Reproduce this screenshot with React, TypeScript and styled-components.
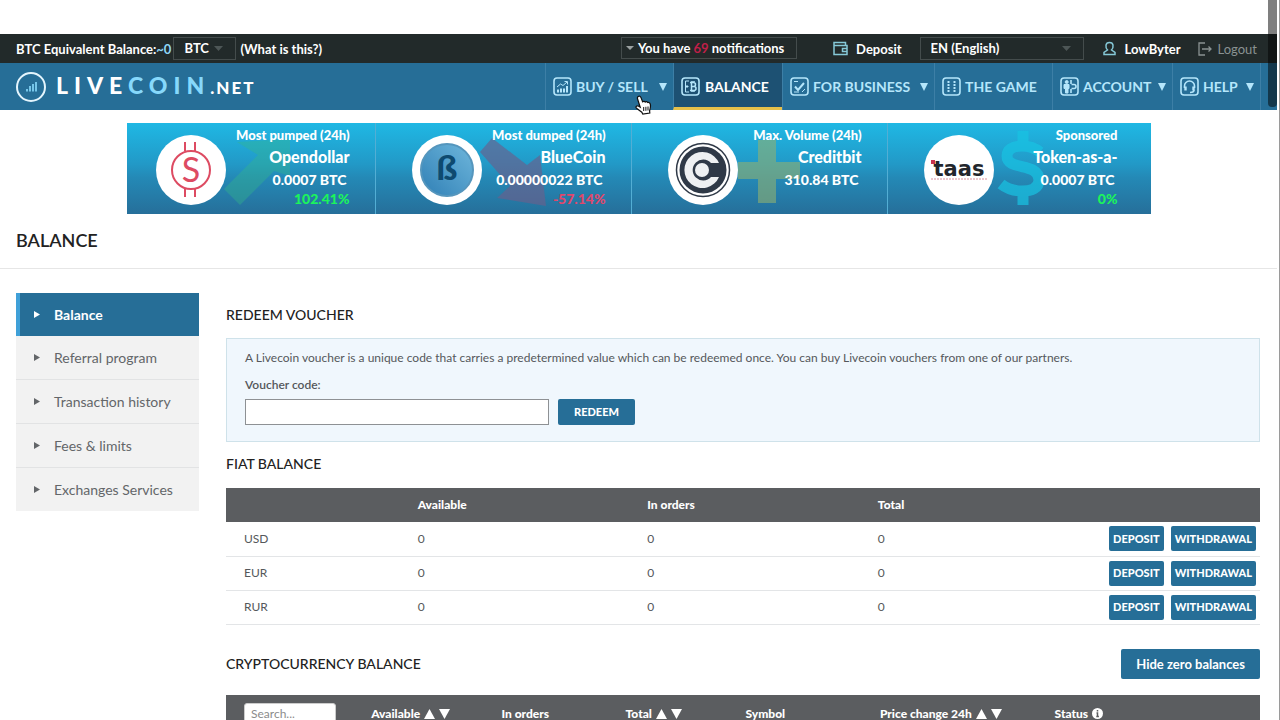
import React from "react";
import styled, { createGlobalStyle, css } from "styled-components";

const Global = createGlobalStyle`
  * { box-sizing: border-box; }
  html { scrollbar-width: none; }
  html::-webkit-scrollbar { display: none; }
  body { margin: 0; background: #fff; color: #55585b; font: 13px/18px Lato, "Liberation Sans", sans-serif; }
  button, input, select { font: inherit; }
  a { color: inherit; text-decoration: none; }
  svg { display: block; flex: none; }
`;

const Page = styled.div`
  padding-top: 34px;
  padding-right: 2px;
  min-height: 100vh;
  border-right: 1px solid #9a9a9a;
`;

/* ---------- top bar ---------- */
const TopBar = styled.div`
  display: flex;
  align-items: center;
  height: 29px;
  padding: 0 20px 0 16px;
  background: #222a2a;
  color: #fff;
  font-size: 13px;
  font-weight: 700;
`;
const Accent = styled.span`
  color: #8fd6f5;
  margin-right: 2px;
`;
const SelectWrap = styled.div<{ $w: number }>`
  display: grid;
  align-items: center;
  width: ${(p) => p.$w}px;
  height: 23px;
  border: 1px solid #444c4c;
  > * { grid-area: 1 / 1; }
  svg { justify-self: end; margin-right: 12px; pointer-events: none; }
`;
const Select = styled.select`
  appearance: none;
  width: 100%;
  height: 21px;
  padding: 0 10px;
  border: 0;
  background: transparent;
  color: #fff;
  line-height: 19px;
`;
const HintLink = styled.a`
  margin-left: 4px;
`;
const TopRight = styled.div`
  display: flex;
  align-items: center;
  margin-left: auto;
`;
const Notice = styled.button`
  display: flex;
  align-items: center;
  gap: 4px;
  width: 176px;
  height: 22px;
  margin: 0 36px 2px 0;
  padding: 0 0 0 4px;
  border: 1px solid #444c4c;
  background: transparent;
  color: #fff;
  white-space: pre;
`;
const Count = styled.span`
  color: #c01f48;
`;
const TopLink = styled.a<{ $before?: number; $after?: number; $dim?: boolean }>`
  display: flex;
  align-items: center;
  gap: 8px;
  margin-left: ${(p) => p.$before ?? 0}px;
  margin-right: ${(p) => p.$after ?? 0}px;
  ${(p) => p.$dim && css`gap: 6px; color: #8a9292; font-weight: 400;`}
`;

/* ---------- main navigation ---------- */
const NavBar = styled.header`
  display: flex;
  align-items: center;
  height: 47px;
  padding: 0 16px;
  background: #266e97;
`;
const Logo = styled.a`
  display: flex;
  align-items: center;
  gap: 10px;
  color: #fff;
  font-size: 23px;
  line-height: 28px;
  font-weight: 900;
  letter-spacing: 6px;
`;
const LogoAccent = styled.span`
  color: #86d8fb;
`;
const LogoSmall = styled.span`
  font-size: 17px;
  letter-spacing: 2px;
`;
const Menu = styled.nav`
  display: flex;
  align-self: stretch;
  margin-left: auto;
  border-right: 1px solid #3d7fa6;
`;
const MenuItem = styled.a<{ $w: number; $active?: boolean }>`
  display: flex;
  align-items: center;
  gap: 4px;
  width: ${(p) => p.$w}px;
  padding: 0 6px 0 7px;
  border-left: 1px solid #3d7fa6;
  color: #b5e6fb;
  font-size: 14px;
  font-weight: 700;
  white-space: nowrap;
  ${(p) =>
    p.$active &&
    css`
      gap: 5px;
      color: #fff;
      background: #1d5173;
      border-bottom: 3px solid #e6c04a;
      padding-top: 3px;
    `}
`;
const MenuText = styled.span`
  flex: 1;
`;

/* ---------- coin cards ---------- */
const Cards = styled.section`
  display: grid;
  grid-template-columns: repeat(4, 1fr);
  max-width: 1024px;
  height: 91px;
  margin: 13px auto 0;
  background: linear-gradient(#1fb8e4 0%, #2299c7 45%, #2489b6 60%, #266f9a 100%);
`;
const Card = styled.a`
  position: relative;
  display: flex;
  align-items: center;
  padding: 2px 33px 0 29px;
  color: #fff;
  font-weight: 900;
  &:not(:last-child)::after {
    content: "";
    position: absolute;
    top: 0;
    bottom: 0;
    right: 7px;
    width: 1px;
    background: #53aed4;
  }
`;
const CardMark = styled.div`
  position: absolute;
  left: 97px;
  top: 8px;
`;
const CardText = styled.div`
  position: relative;
  flex: 1;
  align-self: start;
  text-align: right;
  white-space: nowrap;
`;
const CardLabel = styled.div`
  font-size: 13px;
  line-height: 20px;
`;
const CardName = styled.div`
  font-size: 16px;
  line-height: 24px;
`;
const CardValue = styled.div`
  padding-right: 3px;
  font-size: 14px;
  line-height: 22px;
`;
const CardChange = styled.div<{ $down?: boolean }>`
  font-size: 14px;
  line-height: 16px;
  color: ${(p) => (p.$down ? "#e2476b" : "#1cf45c")};
`;

/* ---------- page body ---------- */
const TitleRow = styled.div`
  padding: 14px 16px 15px;
  border-bottom: 1px solid #e6e6e6;
`;
const Title = styled.h1`
  margin: 0;
  color: #222;
  font-size: 18px;
  font-weight: 600;
  line-height: 25px;
`;
const Columns = styled.div`
  display: flex;
  align-items: flex-start;
  gap: 27px;
  padding: 24px 17px 0 16px;
`;
const Side = styled.nav`
  flex: none;
  width: 183px;
`;
const SideItem = styled.a<{ $active?: boolean }>`
  display: flex;
  align-items: center;
  gap: 14px;
  height: 44px;
  padding-left: 18px;
  border-bottom: 1px solid #e2e3e4;
  background: #f2f2f2;
  color: #636669;
  font-size: 14px;
  &:last-child { border-bottom: 0; height: 43px; }
  ${(p) =>
    p.$active &&
    css`
      height: 43px;
      padding-left: 14px;
      border-left: 4px solid #3fa0d8;
      border-bottom: 0;
      background: #266e97;
      color: #fff;
      font-weight: 700;
    `}
`;
const Main = styled.main`
  flex: 1;
  min-width: 0;
  padding-top: 12px;
`;
const Heading = styled.h2`
  margin: 0;
  color: #222;
  font-size: 14px;
  font-weight: 500;
  line-height: 20px;
`;
const Voucher = styled.form`
  margin: 13px 0 12px;
  padding: 10px 18px 16px;
  border: 1px solid #cfe2ea;
  background: #f0f7fd;
  font-size: 12px;
`;
const Hint = styled.p`
  margin: 0 0 9px;
`;
const FieldLabel = styled.label`
  display: block;
  margin-bottom: 5px;
  font-weight: 600;
`;
const FieldRow = styled.div`
  display: flex;
  gap: 9px;
`;
const CodeInput = styled.input`
  width: 304px;
  height: 26px;
  padding: 0 6px;
  border: 1px solid #8e9194;
  background: #fff;
`;
const Button = styled.button<{ $size?: "small" | "large" }>`
  height: 26px;
  padding: 0 16px;
  border: 0;
  border-radius: 2px;
  background: #266e97;
  color: #fff;
  font-size: 11px;
  font-weight: 900;
  white-space: nowrap;
  ${(p) => p.$size === "small" && css`height: 25px; padding: 0 4px;`}
  ${(p) => p.$size === "large" && css`height: 30px; padding: 0 15px; font-size: 13px; font-weight: 700;`}
`;
const Table = styled.table`
  width: 100%;
  table-layout: fixed;
  border-collapse: collapse;
`;
const FiatTable = styled(Table)`
  margin-top: 14px;
`;
const Th = styled.th<{ $w?: string }>`
  width: ${(p) => p.$w ?? "auto"};
  height: 34px;
  padding: 0 0 0 18px;
  background: #5b5d60;
  color: #fff;
  font-size: 12px;
  font-weight: 900;
  text-align: left;
  white-space: nowrap;
`;
const TallTh = styled(Th)`
  height: 38px;
`;
const Td = styled.td`
  height: 34px;
  padding: 0 0 0 18px;
  border-bottom: 1px solid #e3e5e7;
  font-size: 12px;
`;
const Actions = styled.div`
  display: flex;
  justify-content: flex-end;
  gap: 7px;
  padding-right: 4px;
`;
const CryptoHead = styled.div`
  display: flex;
  align-items: center;
  justify-content: space-between;
  margin: 24px 0 16px;
`;
const SearchInput = styled.input`
  display: block;
  width: 92px;
  height: 21px;
  padding: 0 6px;
  border: 1px solid #ccc;
  border-radius: 3px;
  background: #fff;
  font-weight: 400;
  &::placeholder { color: #8b8b8b; }
`;
const ThInner = styled.span`
  display: flex;
  align-items: center;
  gap: 4px;
`;

/* ---------- overlays ---------- */
const ScrollThumb = styled.div`
  position: fixed;
  top: 0;
  right: 3px;
  width: 9px;
  height: 107px;
  border-radius: 0 0 4px 4px;
  background: rgba(0, 0, 0, 0.5);
`;
const Pointer = styled.svg`
  position: absolute;
  left: 635px;
  top: 95px;
`;

const Tri = ({ w, h, color, dir = "down" }: { w: number; h: number; color: string; dir?: "down" | "up" | "right" }) => {
  const d = {
    down: `M0 0H${w}L${w / 2} ${h}Z`,
    up: `M0 ${h}H${w}L${w / 2} 0Z`,
    right: `M0 0V${h}L${w} ${h / 2}Z`,
  }[dir];
  return (
    <svg width={w} height={h}>
      <path d={d} fill={color} />
    </svg>
  );
};

const icons: Record<string, React.ReactNode> = {
  chart: (
    <>
      <path d="M5 15.500v-3M8 15.500v-4M11 15.500v-4M14 15.500V9" strokeWidth="2" />
      <path d="M4 10l3.500-3 2.500 1.500L14 5M11.500 4.500H14.500V7.500" />
    </>
  ),
  balance: (
    <>
      <path d="M8 4H4.500V15H8M4.500 9.500H7.500M6 8v3" />
      <path d="M10.500 5.500V13.500M9 5.500h3.500a2 2 0 0 1 0 4H10.500h2.500a2 2 0 0 1 0 4H9M11 4v1.500M13 4v1.500M11 13.500V15M13 13.500V15" strokeWidth="1.500" />
    </>
  ),
  business: (
    <>
      <path d="M5 9.500l3 3.500 6-7" strokeWidth="2" />
      <path d="M4 4.500h4M4 15h5M12 15l3-3" />
    </>
  ),
  game: <path d="M5.500 5h2M11.500 5h2M5.500 8h2M11.500 8h2M5.500 11h2M11.500 11h2M5.500 14h2M11.500 14h2" strokeWidth="1.800" />,
  account: (
    <>
      <path d="M4 7.500h5v4H8V16H5.500v-4.500H4Z" fill="#b5e6fb" />
      <circle cx="6.700" cy="5" r="1.500" fill="#b5e6fb" />
      <path d="M11 3v4M11 12v4M11.500 7.500h2.500a2 2 0 0 1 0 4H11.500" strokeWidth="1.600" />
    </>
  ),
  help: (
    <>
      <path d="M4.500 11V9a5 5 0 0 1 10 0v2M14 13c0 2-1.500 2.500-4 2.500" strokeWidth="1.600" />
      <path d="M5.500 9.500v4M13.500 9.500v4" strokeWidth="2.400" />
    </>
  ),
};

const NavIcon = ({ name }: { name: string }) => (
  <svg width="19" height="19" viewBox="0 0 19 19" fill="none" stroke="#b5e6fb">
    <rect x="1" y="1" width="17" height="17" rx="3" strokeWidth="1.600" />
    {icons[name]}
  </svg>
);

const menu = [
  { icon: "chart", text: "BUY / SELL", w: 128, drop: true },
  { icon: "balance", text: "BALANCE", w: 109, active: true },
  { icon: "business", text: "FOR BUSINESS", w: 152, drop: true },
  { icon: "game", text: "THE GAME", w: 118 },
  { icon: "account", text: "ACCOUNT", w: 120, drop: true },
  { icon: "help", text: "HELP", w: 88, drop: true },
];

const Disc = ({ children }: { children: React.ReactNode }) => (
  <svg width="70" height="70" viewBox="0 0 70 70">
    <circle cx="35" cy="35" r="35" fill="#fff" />
    {children}
  </svg>
);

const cards = [
  {
    label: "Most pumped (24h)",
    name: "Opendollar",
    value: "0.0007 BTC",
    change: "102.41%",
    mark: <path d="M13 11L66 8V45L50 40 16 74 0 58 34 24Z" fill="#35b789" opacity="0.38" />,
    logo: (
      <Disc>
        <g fill="none" stroke="#dd4b62" strokeWidth="2">
          <circle cx="35" cy="35" r="19" />
          <path d="M29 7v9M39 7v9M29 54v8M39 54v8" />
        </g>
        <text x="35" y="47" textAnchor="middle" fontFamily="Lato" fontSize="34" fontWeight="400" fill="#dd4b62">S</text>
      </Disc>
    ),
  },
  {
    label: "Most dumped (24h)",
    name: "BlueCoin",
    value: "0.00000022 BTC",
    change: "-57.14%",
    down: true,
    mark: <path d="M12 7L47 34 60 24 66 75 17 67 30 55 0 21Z" fill="#6a5f8c" opacity="0.65" />,
    logo: (
      <Disc>
        <defs>
          <linearGradient id="blue" x1="0" y1="1" x2="1" y2="0">
            <stop offset="0" stopColor="#2f7fb5" />
            <stop offset="1" stopColor="#6fb7dc" />
          </linearGradient>
        </defs>
        <circle cx="35" cy="35" r="26" fill="url(#blue)" stroke="#5596bd" strokeWidth="2" />
        <text x="35" y="45" textAnchor="middle" fontFamily="Lato" fontSize="34" fontWeight="900" fill="#0e4a70">ß</text>
      </Disc>
    ),
  },
  {
    label: "Max. Volume (24h)",
    name: "Creditbit",
    value: "310.84 BTC",
    mark: <path d="M22 9H40V31H64V48H40V72H22V48H2V31H22Z" fill="#8fb072" opacity="0.6" />,
    logo: (
      <Disc>
        <circle cx="35" cy="35" r="26.500" fill="none" stroke="#2f3947" strokeWidth="1.500" />
        <circle cx="35" cy="35" r="23.500" fill="#2f3947" />
        <path d="M51 28A18 18 0 1 0 51 42H43A10.500 10.500 0 1 1 43 28Z" fill="#eef0f2" />
        <circle cx="34" cy="35" r="7" fill="#eef0f2" />
      </Disc>
    ),
  },
  {
    label: "Sponsored",
    name: "Token-as-a-",
    value: "0.0007 BTC",
    change: "0%",
    mark: (
      <path
        d="M31 0V10M31 64V74M48 21C43 17 37 15 30 15 20 15 15 19 15 25 15 40 47 31 47 49 47 57 40 60 30 60 21 60 14 57 9 53"
        fill="none"
        stroke="#18c3e2"
        strokeWidth="11"
        opacity="0.7"
      />
    ),
    logo: (
      <Disc>
        <text x="35" y="41" textAnchor="middle" fontFamily="DejaVu Sans" fontSize="21" fontWeight="700" fill="#22262c">taas</text>
        <rect x="7" y="25" width="4" height="4" fill="#c8324c" />
        <path d="M7 44H63" stroke="#d9909c" strokeWidth="1" strokeDasharray="2 1" />
      </Disc>
    ),
  },
];

const sideItems = ["Balance", "Referral program", "Transaction history", "Fees & limits", "Exchanges Services"];

const cryptoColumns = [
  { text: "Available", w: "12.600%", sort: true },
  { text: "In orders", w: "12%" },
  { text: "Total", w: "11.600%", sort: true },
  { text: "Symbol", w: "13%" },
  { text: "Price change 24h", w: "16.900%", sort: true },
  { text: "Status", info: true },
];

export default function App() {
  return (
    <>
      <Global />
      <Page>
        <TopBar>
          BTC Equivalent Balance:<Accent>~0</Accent>
          <SelectWrap $w={63}>
            <Select defaultValue="BTC" aria-label="Currency">
              <option>BTC</option>
            </Select>
            <Tri w={9} h={5} color="#4d5656" />
          </SelectWrap>
          <HintLink href="#what">(What is this?)</HintLink>
          <TopRight>
            <Notice type="button">
              <Tri w={8} h={4} color="#9ba1a1" />
              <span>You have <Count>69</Count> notifications</span>
            </Notice>
            <TopLink href="#deposit" $after={18}>
              <svg width="15" height="15" viewBox="0 0 15 15" fill="none" stroke="#86c9d8" strokeWidth="1.500">
                <path d="M1 3.500V13.500H14V4.500H1V1.500H12.500V4.500M14 7.500H9.500V10.500H14" />
              </svg>
              Deposit
            </TopLink>
            <SelectWrap $w={164}>
              <Select defaultValue="EN (English)" aria-label="Language">
                <option>EN (English)</option>
              </Select>
              <Tri w={9} h={5} color="#4d5656" />
            </SelectWrap>
            <TopLink href="#user" $before={18} $after={17}>
              <svg width="15" height="15" viewBox="0 0 15 15" fill="none" stroke="#86c9d8" strokeWidth="1.500">
                <path d="M5.500 9C4 7.500 3.800 5.500 4 4.200 4.500 .5 10.500 .5 11 4.200 11.200 5.500 11 7.500 9.500 9L13 11.500V13.500H2V11.500Z" />
              </svg>
              LowByter
            </TopLink>
            <TopLink href="#logout" $dim>
              <svg width="14" height="14" viewBox="0 0 14 14" fill="none" stroke="#8a9292" strokeWidth="1.300">
                <path d="M7 1H1V13H7M4 7H13M10.500 4.500L13 7 10.500 9.500" />
              </svg>
              Logout
            </TopLink>
          </TopRight>
        </TopBar>

        <NavBar>
          <Logo href="#home">
            <svg width="30" height="30" viewBox="0 0 30 30" fill="none">
              <circle cx="15" cy="15" r="14" stroke="#e4f5fd" strokeWidth="2" />
              <path d="M11 19.500V17M14 19.500V14M17 19.500V12M20 19.500V10" stroke="#7fd0f2" strokeWidth="1.800" />
            </svg>
            <span>LIVE<LogoAccent>COIN</LogoAccent><LogoSmall>.NET</LogoSmall></span>
          </Logo>
          <Menu>
            {menu.map((m) => (
              <MenuItem key={m.text} href="#menu" $w={m.w} $active={m.active}>
                <NavIcon name={m.icon} />
                <MenuText>{m.text}</MenuText>
                {m.drop && <Tri w={8} h={8} color="#b5e6fb" />}
              </MenuItem>
            ))}
          </Menu>
        </NavBar>

        <Cards>
          {cards.map((c) => (
            <Card key={c.name} href="#coin">
              <CardMark>
                <svg width="80" height="80" viewBox="0 0 80 80">{c.mark}</svg>
              </CardMark>
              {c.logo}
              <CardText>
                <CardLabel>{c.label}</CardLabel>
                <CardName>{c.name}</CardName>
                <CardValue>{c.value}</CardValue>
                {c.change && <CardChange $down={c.down}>{c.change}</CardChange>}
              </CardText>
            </Card>
          ))}
        </Cards>

        <TitleRow>
          <Title>BALANCE</Title>
        </TitleRow>

        <Columns>
          <Side>
            {sideItems.map((s, i) => (
              <SideItem key={s} href="#section" $active={i === 0}>
                <Tri w={6} h={7} dir="right" color={i === 0 ? "#fff" : "#636669"} />
                {s}
              </SideItem>
            ))}
          </Side>
          <Main>
            <Heading>REDEEM VOUCHER</Heading>
            <Voucher>
              <Hint>
                A Livecoin voucher is a unique code that carries a predetermined value which can be redeemed once. You can buy
                Livecoin vouchers from one of our partners.
              </Hint>
              <FieldLabel htmlFor="code">Voucher code:</FieldLabel>
              <FieldRow>
                <CodeInput id="code" type="text" />
                <Button type="button">REDEEM</Button>
              </FieldRow>
            </Voucher>

            <Heading>FIAT BALANCE</Heading>
            <FiatTable>
              <thead>
                <tr>
                  <Th $w="16.800%" aria-label="Currency" />
                  <Th $w="22.200%">Available</Th>
                  <Th $w="22.300%">In orders</Th>
                  <Th $w="16%">Total</Th>
                  <Th aria-label="Actions" />
                </tr>
              </thead>
              <tbody>
                {["USD", "EUR", "RUR"].map((code) => (
                  <tr key={code}>
                    <Td>{code}</Td>
                    <Td>0</Td>
                    <Td>0</Td>
                    <Td>0</Td>
                    <Td>
                      <Actions>
                        <Button type="button" $size="small">DEPOSIT</Button>
                        <Button type="button" $size="small">WITHDRAWAL</Button>
                      </Actions>
                    </Td>
                  </tr>
                ))}
              </tbody>
            </FiatTable>

            <CryptoHead>
              <Heading>CRYPTOCURRENCY BALANCE</Heading>
              <Button type="button" $size="large">Hide zero balances</Button>
            </CryptoHead>
            <Table>
              <thead>
                <tr>
                  <TallTh $w="12.300%">
                    <SearchInput type="text" placeholder="Search..." aria-label="Search" />
                  </TallTh>
                  {cryptoColumns.map((c) => (
                    <TallTh key={c.text} $w={c.w}>
                      <ThInner>
                        {c.text}
                        {c.sort && (
                          <>
                            <Tri w={11} h={10} dir="up" color="#fff" />
                            <Tri w={11} h={10} color="#fff" />
                          </>
                        )}
                        {c.info && (
                          <svg width="11" height="11" viewBox="0 0 11 11">
                            <circle cx="5.500" cy="5.500" r="5.500" fill="#fff" />
                            <path d="M5.500 2v1.600M4.500 5h1v3.500M4.300 8.500h2.600" stroke="#5b5d60" strokeWidth="1.500" fill="none" />
                          </svg>
                        )}
                      </ThInner>
                    </TallTh>
                  ))}
                </tr>
              </thead>
            </Table>
          </Main>
        </Columns>
      </Page>
      <ScrollThumb />
      <Pointer width="17" height="20" viewBox="0 0 17 20">
        <path
          d="M3.200 1.500C4.300 .8 5.400 1.200 5.900 2.400L7.600 6.800C8.500 6 9.700 6.200 10.200 7 11 6.300 12.200 6.600 12.700 7.500 14 7 15 7.800 15.300 9.200 15.900 12 15.200 14 14.600 15.800L14.800 18 7.800 19 6.800 17.200 1.500 13.200C.3 12 1.500 10.300 3.300 11L5.200 12.200 2.500 3.700C2.200 2.700 2.500 2 3.200 1.500Z"
          fill="#fff"
          stroke="#111"
          strokeWidth="1.200"
        />
        <path d="M8.700 12v4M10.900 11.800v4M13 11.500v4" stroke="#111" strokeWidth="1" />
      </Pointer>
    </>
  );
}
